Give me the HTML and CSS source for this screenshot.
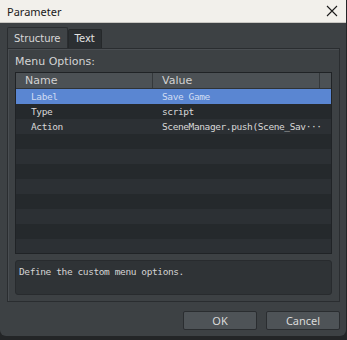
FILE: index.html
```html
<!DOCTYPE html>
<html lang="en">
  <head>
    <meta charset="UTF-8" />
    <title>Parameter</title>
    <link rel="stylesheet" href="styles.css">
  </head>
  <body>
    <div class="window">
      <div class="titlebar">
        <span class="title">Parameter</span>
        <svg class="close" width="12" height="12" viewBox="0 0 12 12">
          <path d="M1 1 L11 11 M11 1 L1 11" stroke="#1c1c1c" stroke-width="1.1" fill="none" />
        </svg>
      </div>
      <div class="content">
        <div class="tabs">
          <div class="tab active">Structure</div>
          <div class="tab">Text</div>
        </div>
        <div class="panel">
          <div class="label">Menu Options:</div>
          <div class="table">
            <div class="thead">
              <div class="th col-name">Name</div>
              <div class="th col-value">Value</div>
              <div class="th col-pad"></div>
            </div>
            <div class="row selected">
              <div class="td col-name">Label</div>
              <div class="td col-value">Save Game</div>
            </div>
            <div class="row">
              <div class="td col-name">Type</div>
              <div class="td col-value">script</div>
            </div>
            <div class="row">
              <div class="td col-name">Action</div>
              <div class="td col-value">SceneManager.push(Scene_Sav&middot;&middot;&middot;</div>
            </div>
            <div class="row"></div>
            <div class="row"></div>
            <div class="row"></div>
            <div class="row"></div>
            <div class="row"></div>
            <div class="row"></div>
            <div class="row"></div>
            <div class="row"></div>
            <div class="row"></div>
          </div>
          <div class="desc">Define the custom menu options.</div>
        </div>
        <div class="buttons">
          <button class="btn">OK</button>
          <button class="btn">Cancel</button>
        </div>
      </div>
    </div>
  </body>
</html>
```

FILE: styles.css
```css
body {
  margin: 0;
  background: #232527;
  font-family: "DejaVu Sans", sans-serif;
}
.window {
  width: 346px;
  height: 336px;
  background: #3d4144;
  border-radius: 0 0 6px 6px;
  overflow: hidden;
  display: flex;
  flex-direction: column;
}
.titlebar {
  height: 22px;
  background: #f2f0eb;
  border-bottom: 1px solid #c9c7c2;
  display: flex;
  align-items: center;
  justify-content: space-between;
  padding: 0 8px 0 7px;
}
.title {
  font-family: "Noto Sans", sans-serif;
  font-size: 11px;
  color: #1a1a1a;
}
.content {
  flex: 1;
  display: flex;
  flex-direction: column;
  padding: 5px 6px 0 7px;
}
.tabs {
  display: flex;
  align-items: flex-end;
  height: 20px;
}
.tab {
  font-size: 10px;
  color: #e2e2e2;
  padding: 0 6px;
  height: 18px;
  line-height: 18px;
  background: #2b2f32;
  border: 1px solid #25282a;
  border-bottom: none;
  border-radius: 2px 2px 0 0;
}
.tab.active {
  height: 20px;
  line-height: 21px;
  background: #3f4346;
  color: #d8d8d8;
  border-color: #2a2d30;
}
.panel {
  border: 1px solid #2a2d30;
  box-shadow: inset 1px 1px 0 #4a4e52;
  background: #3d4144;
  padding: 5px 7px 6px 7px;
  height: 254px;
  box-sizing: border-box;
  display: flex;
  flex-direction: column;
}
.label {
  font-size: 11px;
  color: #d4d4d4;
  height: 18px;
  line-height: 16px;
}
.table {
  border: 1px solid #202326;
  background: #25292c;
  height: 183px;
  box-sizing: border-box;
  overflow: hidden;
}
.thead {
  display: flex;
  height: 15px;
  background: #4c5155;
  border-bottom: 1px solid #2f3336;
}
.th {
  font-size: 11px;
  color: #d2d2d2;
  line-height: 15px;
  border-right: 1px solid #34383b;
  box-sizing: border-box;
}
.col-name {
  width: 137px;
  padding-left: 9px;
  box-sizing: border-box;
}
.col-value {
  width: 167px;
  padding-left: 9px;
  box-sizing: border-box;
}
.col-pad {
  flex: 1;
  border-right: none;
}
.row {
  display: flex;
  height: 15px;
  background: #2c3034;
}
.row:nth-child(odd) {
  background: #25292c;
}
.row.selected {
  background: #5a86d2;
  width: 316px;
}
.td {
  font-family: "DejaVu Sans Mono", monospace;
  font-size: 9.5px;
  letter-spacing: -0.4px;
  line-height: 15px;
  color: #d8d8d8;
  white-space: nowrap;
}
.td.col-name {
  padding-left: 15px;
}
.selected .td {
  color: #cfdcf2;
}
.desc {
  margin-top: 6px;
  height: 35px;
  box-sizing: border-box;
  border: 1px solid #282b2e;
  border-radius: 3px;
  background: #2f3336;
  font-family: "DejaVu Sans Mono", monospace;
  font-size: 9.5px;
  letter-spacing: -0.4px;
  color: #d4d4d4;
  padding: 5px 3px;
}
.buttons {
  display: flex;
  justify-content: flex-end;
  gap: 9px;
  padding-top: 9px;
}
.btn {
  width: 74px;
  height: 19px;
  background: #4e5357;
  border: 1px solid #2a2d30;
  border-radius: 2px;
  color: #dadada;
  font-family: "Noto Sans", sans-serif;
  font-size: 11px;
  padding: 0;
}
```
